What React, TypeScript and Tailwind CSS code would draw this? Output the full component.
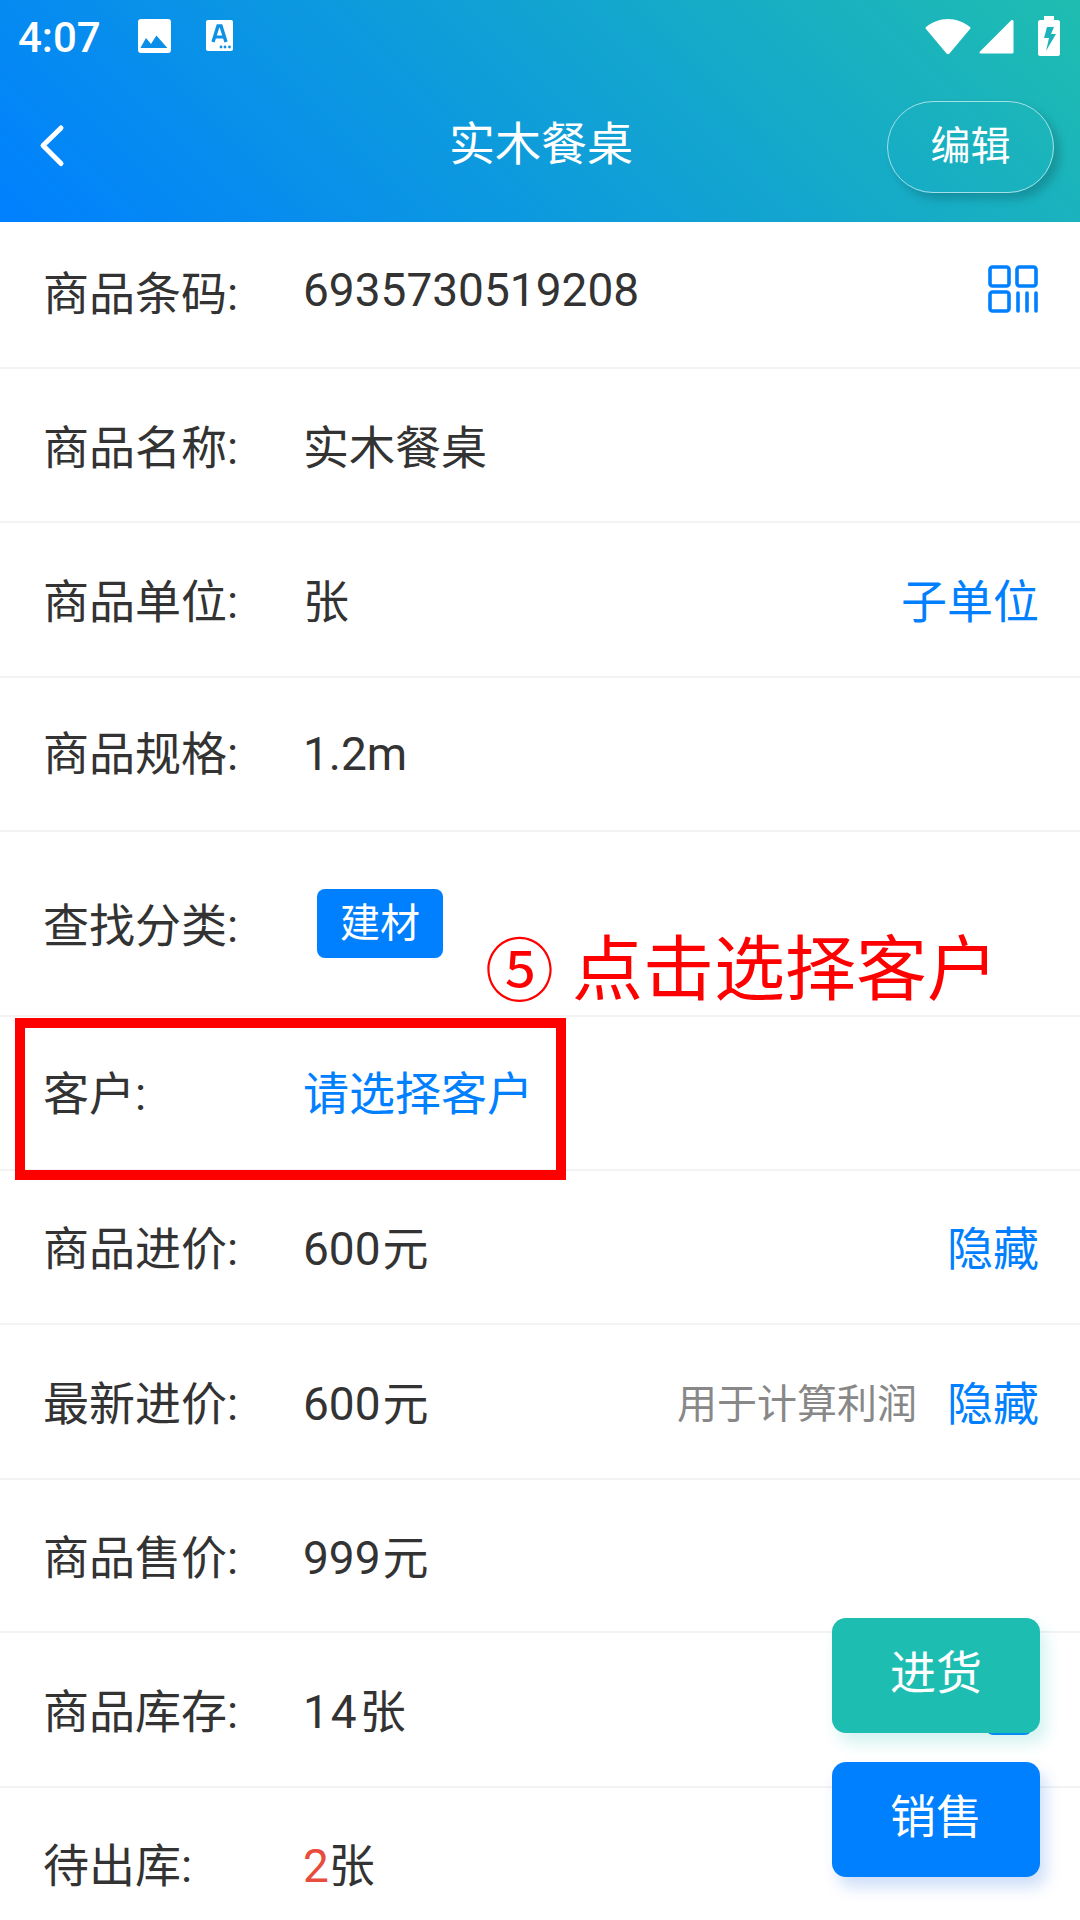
const font = { fontFamily: '"Roboto","Noto Sans CJK SC",sans-serif' };

function Row({ label, h, children, right }: { label: string; h: string; children?: React.ReactNode; right?: React.ReactNode }) {
  return (
    <div className={`${h} flex items-center border-b-2 border-[#f3f3f3] pl-[43px] pr-[41px] text-[46px] text-[#333]`}>
      <div className="w-[260px] shrink-0">{label}</div>
      <div className="flex-1">{children}</div>
      {right}
    </div>
  );
}

const Blue = ({ children }: { children: React.ReactNode }) => <span className="text-[#0080ff]">{children}</span>;

export default function App() {
  return (
    <div className="relative w-[1080px] h-[1920px] overflow-hidden bg-white" style={font}>
      <header className="h-[222px] bg-[linear-gradient(45deg,#0080ff,#1fbdb0)] text-white">
        <div className="h-[72px] flex items-center pl-[18px] pr-[20px]">
          <span className="text-[42px] font-medium w-[119px] leading-none pt-[3px]">4:07</span>
          <svg width="36" height="36" viewBox="0 0 36 36" className="mr-[32px]">
            <rect x="1" y="1" width="33" height="34" rx="3" fill="#fff" />
            <path d="M3.400 30L9 20l5 6 5.400-8.400 11 12.400z" fill="#0b8ee8" />
          </svg>
          <svg width="30" height="34" viewBox="0 0 30 34">
            <rect x="1" y="1" width="27" height="31" rx="2" fill="#fff" />
            <path d="M8 23L13 7h3l5 16" fill="none" stroke="#0e90e4" strokeWidth="3.4" />
            <path d="M10 18h9" stroke="#0e90e4" strokeWidth="3" />
            <circle cx="16" cy="28" r="1.4" fill="#0e90e4" /><circle cx="20" cy="28" r="1.4" fill="#0e90e4" /><circle cx="24.5" cy="28" r="1.4" fill="#0e90e4" />
          </svg>
          <div className="flex-1" />
          <svg width="46" height="37" viewBox="0 0 46 37" className="mr-[8px]">
            <path d="M1 9C7 4 15 1 23 1s16 3 22 8c.7.7.7 1.400 0 2L24.500 35.500c-.8 1-2.200 1-3 0L1 11c-.6-.6-.6-1.400 0-2z" fill="#fff" />
          </svg>
          <svg width="35" height="35" viewBox="0 0 35 35" className="mr-[24px]">
            <path d="M33 1c1 0 1.500.6 1.500 1.500V33c0 1-.5 1.500-1.500 1.500H2c-1.500 0-2-1-1-2L32 1.500c.3-.3.6-.5 1-.5z" fill="#fff" />
          </svg>
          <svg width="22" height="40" viewBox="0 0 22 40">
            <path d="M6 0h10v4h4c1 0 2 1 2 2v32c0 1-1 2-2 2H2c-1 0-2-1-2-2V6c0-1 1-2 2-2h4z" fill="#fff" />
            <path d="M9 11h7l-3 7h5L8 35l3-13H6z" fill="#1cb4ba" />
          </svg>
        </div>
        <div className="relative h-[144px] flex items-center justify-center pb-[1px]">
          <svg width="28" height="44" viewBox="0 0 28 44" className="absolute left-[39px] top-[52px]">
            <path d="M22 4L4 21.500 22 39.500" fill="none" stroke="#fff" strokeWidth="5" strokeLinecap="round" strokeLinejoin="round" />
          </svg>
          <span className="text-[46px] mt-[2px] ml-[2px]">实木餐桌</span>
          <div className="absolute left-[887px] top-[29px] w-[167px] h-[92px] rounded-[46px] border border-white/60 shadow-[6px_6px_10px_rgba(0,0,0,0.18)] flex items-center justify-center text-[40px]">编辑</div>
        </div>
      </header>

      <Row label="商品条码:" h="h-[147px]" right={
        <svg width="50" height="48" viewBox="0 0 50 48" className="mt-[-11px] mr-[1px]">
          <g fill="none" stroke="#0080ff" strokeWidth="3.600">
            <rect x="2" y="2" width="19" height="19" rx="2.500" /><rect x="29" y="2" width="19" height="19" rx="2.500" /><rect x="2" y="27" width="19" height="19" rx="2.500" />
            <path d="M30 28v18M39 28v18M48 28v18" strokeLinecap="round" />
          </g>
        </svg>
      }><span className="relative top-[-4px]">6935730519208</span></Row>
      <Row label="商品名称:" h="h-[154px] pt-[7px]">实木餐桌</Row>
      <Row label="商品单位:" h="h-[155px] pt-[5px]" right={<Blue>子单位</Blue>}>张</Row>
      <Row label="商品规格:" h="h-[154px]">1.2m</Row>
      <Row label="查找分类:" h="h-[185px] pt-[5px]">
        <div className="ml-[14px] w-[126px] h-[69px] rounded-[8px] bg-[#0080ff] text-white text-[40px] flex items-center justify-center mt-[-5px]">建材</div>
      </Row>
      <Row label="客户:" h="h-[154px] pt-[2px]"><Blue>请选择客户</Blue></Row>
      <Row label="商品进价:" h="h-[154px] pt-[5px]" right={<Blue>隐藏</Blue>}>600<span className="ml-[2px]">元</span></Row>
      <Row label="最新进价:" h="h-[155px] pt-[6px]" right={<><span className="text-[40px] text-[#888] mr-[30px]">用于计算利润</span><Blue>隐藏</Blue></>}>600<span className="ml-[2px]">元</span></Row>
      <Row label="商品售价:" h="h-[153px] pt-[5px]">999<span className="ml-[2px]">元</span></Row>
      <Row label="商品库存:" h="h-[155px] pt-[5px]"><span className="tracking-[2px]">14</span><span className="ml-[1px]">张</span></Row>
      <Row label="待出库:" h="h-[160px] pb-[2px]"><span className="text-[#e74c3c]">2</span>张</Row>

      <div className="absolute left-[987px] top-[1700px] w-[44px] h-[35px] rounded-[6px] bg-[#0080ff]" />
      <div className="absolute left-[832px] top-[1618px] w-[208px] h-[115px] rounded-[14px] bg-[#1ebdb2] text-white text-[46px] pb-[4px] flex items-center justify-center shadow-[6px_10px_16px_rgba(30,189,178,0.2)]">进货</div>
      <div className="absolute left-[832px] top-[1762px] w-[208px] h-[115px] rounded-[14px] bg-[#0080ff] text-white text-[46px] pb-[4px] flex items-center justify-center shadow-[6px_10px_16px_rgba(0,90,220,0.2)]">销售</div>

      <div className="absolute left-[15px] top-[1018px] w-[551px] h-[162px] border-[10px] border-[#ff0000]" />
      <div className="absolute left-[485px] top-[922px] text-[71px] leading-[90px] text-[#ff0000] whitespace-nowrap flex items-center gap-[18px]">
        <span className="text-[69px] pt-[6px]">⑤</span><span>点击选择客户</span>
      </div>
    </div>
  );
}
